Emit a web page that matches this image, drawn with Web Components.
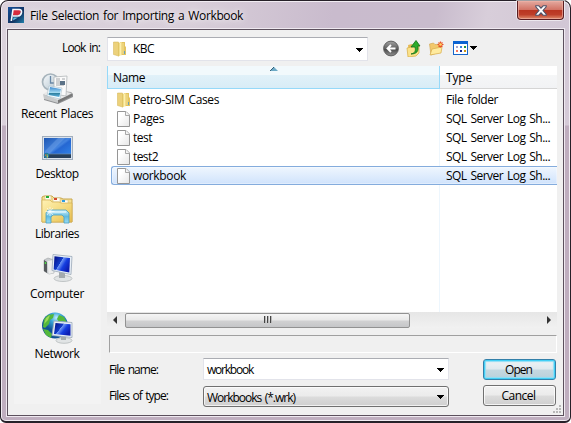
<!DOCTYPE html>
<html lang="en"><head><meta charset="utf-8"><title>File Selection for Importing a Workbook</title>
<style>html,body{margin:0;width:571px;height:423px;overflow:hidden;background:#fff}body{font:12px/16px "Open Sans","Noto Sans",sans-serif;color:#000}</style></head>
<body><file-dialog></file-dialog>
<script>
const define=(name,html,init)=>{
  const t=document.createElement('template');t.innerHTML=html;
  customElements.define(name,class extends HTMLElement{
    constructor(){super();this.attachShadow({mode:'open'}).append(t.content.cloneNode(true));}
    connectedCallback(){if(init)init(this,this.shadowRoot);}
  });
};
/* Label whose tracking is adjusted so that it fills the width given in "w". */
define('ui-text',`<style>:host{display:block;white-space:nowrap;height:16px;line-height:var(--line,18px);font-size:12px;word-spacing:1.3px;flex:none}span{display:inline-block}</style><span><slot></slot></span>`,(h,r)=>{
  const s=r.querySelector('span'),w=+h.getAttribute('w');
  h.style.width=w+'px';
  s.style.letterSpacing=((w-s.getBoundingClientRect().width)/h.textContent.length)+'px';
});
const icons={
recent:`<svg width="32" height="32" viewBox="0 0 32 32"><defs><linearGradient id="a" x2="1" y2="1"><stop stop-color="#f7fafc"/><stop offset="1" stop-color="#b3c4cf"/></linearGradient><linearGradient id="b" y2="1" x2="0"><stop stop-color="#3d8ad0"/><stop offset=".55" stop-color="#a4d9f0"/><stop offset=".6" stop-color="#2c7c9a"/><stop offset="1" stop-color="#62b6e2"/></linearGradient></defs><path d="M3 23l7-5 20 2 2 2v3l-15 7-14-4z" fill="#8f9193"/><path d="M2 22l8-5 21 4-14 8z" fill="#e8e8e8"/><path d="M2 22l15 6v3L3 27z" fill="#c8cacb"/><path d="M17 28l14-6v2l-14 7z" fill="#777"/><circle cx="9.5" cy="10" r="8" fill="url(#a)" stroke="#a7b4bc" stroke-width="1.7"/><path d="M9.5 4v7h5" fill="none" stroke="#6887a6" stroke-width="1.3"/><path d="M13 5l13-1-1 20-12-2z" fill="#fafafa" stroke="#b1b6b9" stroke-width=".8"/><path d="M15 7h4m2 0h3m-9 2h4m-4 2h4m-4 2h8" stroke="#8e9398" stroke-width=".8"/><rect x="19" y="9" width="5" height="4" fill="#5b7287"/><path d="M8 14l13 2-2 11-13-3z" fill="#f8fdff" stroke="#a6bcc9" stroke-width=".6"/><path d="M9 15l11 2-1.700 8L7.500 23z" fill="url(#b)"/></svg>`,
desktop:`<svg width="32" height="32" viewBox="0 0 32 32"><defs><linearGradient id="a" x2="1" y2="1"><stop stop-color="#1d57b3"/><stop offset=".48" stop-color="#4383df"/><stop offset=".55" stop-color="#2567d2"/><stop offset="1" stop-color="#3388ed"/></linearGradient></defs><rect x="1.500" y="4.500" width="30" height="23" fill="#dbe3ed" stroke="#a2aebc"/><rect x="3" y="6" width="27" height="20" fill="url(#a)"/><path d="M4 19L17 6h7L8 22H4z" fill="#8db8f3" opacity=".3"/><rect x="3" y="22" width="27" height="4" fill="#273f59"/><path d="M8 22h22" stroke="#6e8ca9" stroke-width=".7"/><circle cx="5.500" cy="23.500" r="2.700" fill="#24799b"/><path d="M4 22.500h1.300v1.300H4z" fill="#e7653d"/><path d="M5.700 22.500H7v1.300H5.700z" fill="#8bca52"/><path d="M5.700 24.200H7v1.300H5.700z" fill="#efcf55"/></svg>`,
libraries:`<svg width="32" height="32" viewBox="0 0 32 32"><defs><linearGradient id="a" x2="1" y2="1"><stop stop-color="#fff2b5"/><stop offset=".6" stop-color="#f3d778"/><stop offset="1" stop-color="#e6ba4d"/></linearGradient><linearGradient id="b" y2="1" x2="0"><stop stop-color="#d2f2fb"/><stop offset=".5" stop-color="#62bbdf"/><stop offset="1" stop-color="#9adcf2"/></linearGradient></defs><path d="M1 7V5l2-1h8l2 2h7l2 1h9v23H1z" fill="#f5df92" stroke="#c9a84f"/><path d="M4 4h6v4H4zM12 6h7v4h-7zM20 8h7v4h-7z" fill="#fffdf4" stroke="#cdbb77" stroke-width=".5"/><path fill="#24ad35" d="M5 4h3v2H5z"/><path fill="#d44a2c" d="M13 6h3v2h-3z"/><path fill="#2c9de0" d="M21 8h3v2h-3z"/><path d="M1 8h8l2 2h7l2 1h11v19H1z" fill="url(#a)" stroke="#d2af55" stroke-width=".7"/><path d="M5 31V21l2-3h18l3 3v10h-5v-6l-2-2h-9l-2 2v6z" fill="url(#b)" stroke="#479fc4" stroke-width=".8"/><path d="M7 20h18" stroke="#f3fdff"/><path d="M9 15v9M4.500 19.500h9M6 16l6 7m0-7l-6 7" stroke="#fff" stroke-width=".7" opacity=".9"/></svg>`,
computer:`<svg width="32" height="32" viewBox="0 0 32 32"><defs><linearGradient id="a" x2="1" y2=".6"><stop stop-color="#020b80"/><stop offset=".46" stop-color="#123dca"/><stop offset=".48" stop-color="#7198f3"/><stop offset=".7" stop-color="#153ee0"/><stop offset="1" stop-color="#0d1db1"/></linearGradient></defs><path d="M3 8l4-2 6 2v13l-5 1-5-3z" fill="#c9cccf" stroke="#9da2a4" stroke-width=".6"/><path d="M3 8l3 2v11l-3-2z" fill="#55595c"/><path d="M6.500 9l6-1v13l-5 1z" fill="#eceded"/><circle cx="4.500" cy="11" r=".9" fill="#4dde45"/><ellipse cx="22" cy="26.500" rx="9" ry="3" fill="#e1e4e5" stroke="#b5babb" stroke-width=".8"/><path d="M18 20h6v6h-6z" fill="#a4aaad"/><path d="M12 2.500l19 2-1 18-19-4z" fill="#e8eff7" stroke="#9ba8b8" stroke-width=".8"/><path d="M13.500 4.300L29 6l-.7 14.500L12.700 17.500z" fill="url(#a)"/></svg>`,
network:`<svg width="32" height="32" viewBox="0 0 32 32"><defs><radialGradient id="g" cx=".55" cy=".2"><stop stop-color="#bfedfd"/><stop offset=".45" stop-color="#35a3d6"/><stop offset="1" stop-color="#115296"/></radialGradient><linearGradient id="a" x2="1" y2=".6"><stop stop-color="#020b80"/><stop offset=".46" stop-color="#123dca"/><stop offset=".48" stop-color="#7198f3"/><stop offset=".7" stop-color="#153ee0"/><stop offset="1" stop-color="#0d1db1"/></linearGradient></defs><circle cx="14" cy="13.500" r="13" fill="url(#g)"/><path d="M3 7l4-4 6-1-1 4-3 2-1 4-4 4-2-1zM18 3l5 2 3 6-4-2-4 1-2-3zM2 17l5 1 4 4-1 4-5-3z" fill="#54b83b"/><path d="M5 6l4-3-2 5-4 4z" fill="#a0d95a"/><ellipse cx="23" cy="28.500" rx="8" ry="2.800" fill="#e1e4e5" stroke="#b5babb" stroke-width=".8"/><path d="M20 23h5v5h-5z" fill="#a4aaad"/><path d="M13 9l18 1.500v15l-20-2z" fill="#e8eff7" stroke="#9ba8b8" stroke-width=".8"/><path d="M14.500 11l15 1.200v11.500L13 22z" fill="url(#a)"/></svg>`,
folder:`<svg width="16" height="16" viewBox="0 0 16 16"><defs><linearGradient id="a" x2="1" y2="0"><stop stop-color="#d9b951"/><stop offset=".6" stop-color="#fff3b0"/><stop offset="1" stop-color="#ecd07a"/></linearGradient></defs><path d="M8 1h5v4l1 1v8H8z" fill="#e3c35f"/><path d="M1.500 1h5v14l-5-1.500z" fill="#ecd17b" stroke="#d3b252" stroke-width=".5"/><path d="M6 2l4-1v13L6 15.500z" fill="url(#a)"/><path d="M12.500 10v3" stroke="#6aa0b5"/><path d="M11 2v11" stroke="#f5e498"/></svg>`,
file:`<svg width="16" height="16" viewBox="0 0 16 16"><defs><linearGradient id="a" x2="1" y2="1"><stop offset=".3" stop-color="#fff"/><stop offset="1" stop-color="#e6e6e6"/></linearGradient></defs><path d="M1.500.5h8.500l3.500 3.500v11.500h-12z" fill="url(#a)" stroke="#969696"/><path d="M9.500.5V4.500h4" fill="#f4f4f4" stroke="#a9a9a9"/></svg>`,
back:`<svg width="17" height="17" viewBox="0 0 17 17"><defs><linearGradient id="a" x2="0" y2="1"><stop stop-color="#a2a2a2"/><stop offset=".5" stop-color="#626262"/><stop offset=".52" stop-color="#454545"/><stop offset="1" stop-color="#929292"/></linearGradient></defs><circle cx="8" cy="8.500" r="7.400" fill="url(#a)" stroke="#585858" stroke-width=".9"/><path d="M12.500 8.500H5M8 5l-3.500 3.500L8 12" fill="none" stroke="#fff" stroke-width="1.900"/></svg>`,
up:`<svg width="17" height="17" viewBox="0 0 17 17"><path d="M3 5l4-1 1 1 5-1v9l-9 2z" fill="#e5b955"/><path d="M2 8l9-2 3-1v8l-3 3-8 1z" fill="#fbe289" stroke="#d7ac43" stroke-width=".7"/><path d="M6 14c4-1 5-3 4-7H6l5-6.500L15 6h-2.200c1 5-1 8-6.800 8z" fill="#2dac2b" stroke="#137017" stroke-width=".8"/></svg>`,
newfolder:`<svg width="17" height="17" viewBox="0 0 17 17"><path d="M1.500 4l4-1 1.500 1.500 5-.5v8l-9 3z" fill="#f2c86b" stroke="#cfa34e" stroke-width=".6"/><path d="M2 15L4 9l10-2-1 6z" fill="#ffeb9f" stroke="#d9ac4b" stroke-width=".7"/><path d="M12.500 1.500v6M9.500 4.500h6M10.500 2.500l4 4m0-4l-4 4" stroke="#e8522a" stroke-width="1.200"/><circle cx="12.500" cy="4.500" r="1.300" fill="#ffd766"/></svg>`,
views:`<svg width="15" height="14" viewBox="0 0 15 14"><rect x=".5" y=".5" width="14" height="13" fill="#fff" stroke="#1665ca"/><path d="M0 0h15v3H0z" fill="#0b63d2"/><path fill="#a8a3ca" d="M3 5h2v2H3z"/><path fill="#3482e0" d="M7 5h2v2H7z"/><path fill="#24923a" d="M11 5h2v2h-2z"/><path fill="#f4765e" d="M3 9h2v2H3z"/><path fill="#112a94" d="M7 9h2v2H7z"/><path fill="#cb9713" d="M11 9h2v2h-2z"/></svg>`,
down:`<svg width="7" height="4" viewBox="0 0 7 4" shape-rendering="crispEdges"><path d="M0 0h7v1H0zM1 1h5v1H1zM2 2h3v1H2zM3 3h1v1H3z"/></svg>`,
app:`<svg width="16" height="16" viewBox="0 0 16 16"><defs><linearGradient id="a" x2="1" y2="1"><stop stop-color="#14509a"/><stop offset=".6" stop-color="#123261"/><stop offset="1" stop-color="#2382ad"/></linearGradient></defs><path d="M0 0h16v16H0z" fill="url(#a)"/><path d="M5 3h7l1 2-2 3-6 1z" fill="#d62c3f"/><path d="M3.300 14L5 2.500h6q3 0 2.500 3T10 9H5" fill="none" stroke="#f4f8fd" stroke-width="1.600"/><path d="M5.500 10.500H10l-5 3z" fill="#61c5e8"/></svg>`
};
define('ui-icon',`<style>:host{display:block;flex:none}svg{display:block}</style><div></div>`,(h,r)=>{r.querySelector('div').innerHTML=icons[h.getAttribute('name')];});
define('title-bar',`<style>:host{display:flex;height:26px;padding-left:1px;align-items:flex-start}ui-icon{margin-top:4px}ui-text{margin:4px 0 0 6px;text-shadow:0 0 8px #fff,0 0 5px #fff8}
button{box-sizing:border-box;width:47px;height:19px;margin:-2px 0 0 auto;border:1px solid #581d22;border-top:0;border-radius:0 0 4px 4px;padding:0;background:linear-gradient(#e4aaa0,#d27365 48%,#b93420 50%,#be3e29 75%,#df8b6b);box-shadow:inset 0 0 0 1px #efb1a7aa,0 0 0 1px #ffffff90;display:flex;justify-content:center;align-items:center}svg{display:block}</style>
<ui-icon name="app"></ui-icon><ui-text w="213">File Selection for Importing a Workbook</ui-text><button aria-label="Close"><svg width="12" height="11" viewBox="0 0 12 11"><path d="M.8.8h3L6 3.200 8.200.8h3v1L8 5.500l3.200 3.700v1h-3L6 7.800l-2.200 2.400h-3v-1L4 5.500.8 1.800z" fill="#fff" stroke="#4f5268" stroke-width="1.100"/></svg></button>`);
customElements.define('places-bar',class extends HTMLElement{
  constructor(){super();const r=this.attachShadow({mode:'open'});
  r.innerHTML=`<style>:host{display:block;box-sizing:border-box;width:87px;height:338px;padding-top:6px;background:#f3f3f3}section{display:flex;flex-direction:column;align-items:center;height:60px}ui-icon{margin:0 0 1px -2px}ui-text{margin-left:-1px}</style>`+
  [['recent','Recent Places',72],['desktop','Desktop',43],['libraries','Libraries',44],['computer','Computer',54],['network','Network',45]].map(([i,t,w])=>`<section><ui-icon name="${i}"></ui-icon><ui-text w="${w}">${t}</ui-text></section>`).join('');}
});
define('combo-box',`<style>:host{display:flex;box-sizing:border-box;align-items:center;padding:0 4px 0 3px;background:#fff;border:1px solid #e2e3ea;border-top-color:#abadb3}:host([drop]){background:linear-gradient(#f2f2f2,#ebebeb 49%,#dcdcdc 51%,#cfcfcf);border:1px solid #707070;border-radius:3px;box-shadow:inset 0 0 0 1px #ffffffb0}.d{margin-left:auto;margin-top:1px}</style><slot></slot><ui-icon class="d" name="down"></ui-icon>`);
define('tool-bar',`<style>:host{display:flex;align-items:center;height:18px}</style><ui-icon name="back"></ui-icon><ui-icon name="up" style="margin-left:5px"></ui-icon><ui-icon name="newfolder" style="margin-left:6px"></ui-icon><ui-icon name="views" style="margin-left:8px"></ui-icon><ui-icon name="down" style="margin-left:2px"></ui-icon>`);
define('file-row',`<style>:host{--line:16px;display:grid;grid-template-columns:328px 1fr;box-sizing:border-box;height:19px;margin-left:4px;border:1px solid transparent;border-right:0}:host([selected]){border-color:#84acdd;border-radius:3px 0 0 3px;background:linear-gradient(#eff6fe,#d0e3fc);box-shadow:inset 0 0 0 1px #fff5}div{display:flex;align-items:center;padding-left:4px;gap:1px}div+div{padding-left:6px}</style><div><slot name="icon"></slot><slot></slot></div><div><slot name="type"></slot></div>`);
define('scroll-bar',`<style>:host{display:flex;box-sizing:border-box;height:16px;background:linear-gradient(#e6e6e6,#f1f1f1);align-items:center}.t{box-sizing:border-box;width:285px;height:15px;margin-left:6px;border:1px solid #929292;border-radius:2px;background:linear-gradient(#f5f5f5,#e8e8e8 49%,#d2d2d3 51%,#c5c6c8);display:flex;align-items:center;justify-content:center;gap:1px}i{width:2px;height:7px;margin-top:-2px;background:linear-gradient(90deg,#454545 50%,#b8b8b8 50%)}svg{display:block}.l{margin-left:6px;margin-right:2px}.r{margin-left:auto;margin-right:6px}</style><svg class="l" width="4" height="8"><path d="M4 0v8L0 4z" fill="#333"/></svg><div class="t"><i></i><i></i><i></i></div><svg class="r" width="4" height="8"><path d="M0 0v8l4-4z" fill="#333"/></svg>`);
define('file-list',`<style>:host{display:flex;flex-direction:column;width:450px;height:262px;background:#fff}header{display:grid;grid-template-columns:333px 1fr;height:23px;background:linear-gradient(#fff 40%,#f5f6f7 41%,#f1f2f4)}header div{box-sizing:border-box;padding:3px 0 0 6px;border-bottom:1px solid #d5d5d5;position:relative}header .s{border:solid #96d9f9;border-width:0 1px 1px;padding-left:5px;background:linear-gradient(#f2f9fc 40%,#e1f1f9 41%,#d8ecf6)}.s svg{position:absolute;left:162px;top:1px}main{flex:1;padding-top:1px;background:linear-gradient(#edf6fd,#edf6fd) 332px 0/1px 100% no-repeat}</style><header><div class="s"><ui-text w="32">Name</ui-text><svg width="8" height="5"><path d="M0 4l4-4 4 4z" fill="#6daac6"/><path d="M0 4l4-4" stroke="#355f78"/></svg></div><div><ui-text w="26">Type</ui-text></div></header><main><slot></slot></main><scroll-bar></scroll-bar>`);
define('push-button',`<style>:host{--line:16px;box-sizing:border-box;display:flex;justify-content:center;align-items:center;width:73px;height:21px;padding-right:2px;border:1px solid #707070;border-radius:3px;background:linear-gradient(#f2f2f2,#ebebeb 49%,#dcdcdc 51%,#cfcfcf);box-shadow:inset 0 0 0 1px #ffffffc0}:host([primary]){border-color:#3480a9;background:linear-gradient(#eff3f5,#dfe9ee 49%,#c5d9e1 51%,#b9d0da);box-shadow:inset 0 0 0 1px #42cff5,inset 0 0 1px 2px #91def5}</style><slot></slot>`);
define('file-dialog',`<style>
:host{display:block;box-sizing:border-box;width:571px;height:423px;border:1px solid #262028;border-bottom-width:2px;border-radius:8px 8px 6px 6px;padding:2px 6px 6px;
box-shadow:inset 0 0 0 1px #f1ecf2;background:linear-gradient(#fff0 124px,#bfaebf 125px) 0 0/100% 100%,linear-gradient(100deg,#dbd2dc,#d8ced9 30%,#c9bbcd 52%,#c9bccd 68%,#d8ceda 76%,#d2c7d5 88%,#dbd2dc)}
.client{box-sizing:border-box;height:387px;width:557px;border:1px solid #5c505d;background:#f0f0f0;display:grid;grid-template-columns:87px 450px;grid-template-rows:36px 349px;column-gap:6px;padding:0 6px;box-shadow:0 0 0 1px #efe9f0;position:relative}
.top{grid-column:1/3;height:36px;display:flex;box-sizing:border-box;padding:7px 0 0 48px;align-items:flex-start}.top ui-text{margin-top:2px}.top combo-box{--line:16px;margin-left:7px;width:261px;height:24px}.top combo-box ui-icon{margin-left:1px}.top combo-box ui-text{margin:0 0 0 5px}.top tool-bar{margin:2px 0 0 15px}
.status{box-sizing:border-box;height:18px;width:448px;margin:7px 0 5px 2px;border:1px solid #fff;border-top-color:#a0a0a0;border-left-color:#a0a0a0}
.form{display:grid;grid-template-columns:94px 246px 73px;grid-template-rows:22px 21px;row-gap:5px;margin-left:2px;align-items:start}
.form combo-box{height:22px}.form combo-box[drop]{height:21px;margin-top:1px}.form push-button{margin:1px 0 0 34px}
.form>ui-text{margin-top:3px}.form>.b{margin-top:2px}.form push-button:last-child{margin-top:0}
svg{position:absolute;right:1px;bottom:1px}
</style>
<title-bar></title-bar>
<div class="client"><div class="top"><ui-text w="38">Look in:</ui-text><combo-box><ui-icon name="folder"></ui-icon><ui-text w="21">KBC</ui-text></combo-box><tool-bar></tool-bar></div>
<places-bar></places-bar>
<div><file-list>
<file-row><ui-icon slot="icon" name="folder"></ui-icon><ui-text w="86">Petro-SIM Cases</ui-text><ui-text slot="type" w="52">File folder</ui-text></file-row>
<file-row><ui-icon slot="icon" name="file"></ui-icon><ui-text w="31">Pages</ui-text><ui-text slot="type" w="104">SQL Server Log Sh...</ui-text></file-row>
<file-row><ui-icon slot="icon" name="file"></ui-icon><ui-text w="19">test</ui-text><ui-text slot="type" w="104">SQL Server Log Sh...</ui-text></file-row>
<file-row><ui-icon slot="icon" name="file"></ui-icon><ui-text w="25">test2</ui-text><ui-text slot="type" w="104">SQL Server Log Sh...</ui-text></file-row>
<file-row selected><ui-icon slot="icon" name="file"></ui-icon><ui-text w="53">workbook</ui-text><ui-text slot="type" w="104">SQL Server Log Sh...</ui-text></file-row>
</file-list><div class="status"></div>
<div class="form"><ui-text w="49">File name:</ui-text><combo-box><ui-text w="46">workbook</ui-text></combo-box><push-button primary><ui-text w="27">Open</ui-text></push-button>
<ui-text class="b" w="59">Files of type:</ui-text><combo-box drop><ui-text w="88">Workbooks (*.wrk)</ui-text></combo-box><push-button><ui-text w="34">Cancel</ui-text></push-button></div></div>
<svg width="9" height="9"><path fill="#b8b8b8" d="M6 0h2v2H6zM3 3h2v2H3zM6 3h2v2H6zM0 6h2v2H0zM3 6h2v2H3zM6 6h2v2H6z"/></svg>
</div>`);
</script></body></html>
